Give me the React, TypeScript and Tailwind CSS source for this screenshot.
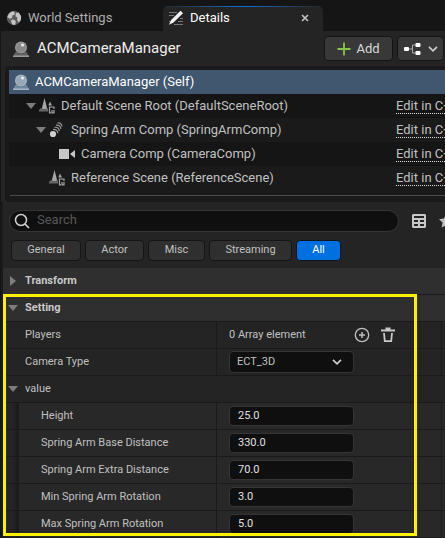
import type { ReactNode } from "react";

function Globe() {
  return (
    <svg viewBox="0 0 16 16" className="size-4 shrink-0">
      <circle cx="8" cy="8" r="7.2" fill="#5c5c5c" />
      <path d="M7 1.2 3.4 3 1.2 7l2.6 1.8L6 8l.4-2.6L9 4.2 8.4 2zM10 3l-.6 3.2 2 1.4L11 10l2 2.4 2-3V6l-2.4-3.4zM6 9.4 5 11l1.2 3.6 3 .4.6-3.4L8.6 10z" fill="#c4c4c4" />
    </svg>
  );
}

function DetailsIcon() {
  return (
    <svg viewBox="0 0 16 16" className="size-4 shrink-0">
      <path d="M1 2.500h8M1 5.500h5M12 8.500h3M1 11.500h2M10 11.500h5M6 14.500h9" stroke="#777" strokeWidth="1" />
      <path d="M12.500.800 15 3.300 5.500 12.500 1 14.800l2.100-4.900z" fill="#f2f2f2" />
    </svg>
  );
}

function ActorIcon({ light, dark }: { light: string; dark: string }) {
  return (
    <svg viewBox="0 0 16 16" className="size-4 shrink-0">
      <path d="M2.500 11h2L6 12.500h4l1.500-1.500h2L16 15.500H0z" fill={dark} />
      <path d="M0 14.500h16V16H0z" fill={light} />
      <circle cx="8" cy="6.500" r="6" fill={light} />
      <circle cx="8" cy="6.500" r="4.800" fill={dark} opacity=".3" />
      <circle cx="9.500" cy="4" r="1.500" fill="#eee" />
    </svg>
  );
}

function SceneIcon() {
  return (
    <svg viewBox="0 0 16 16" className="size-4 shrink-0">
      <path d="M5.500 0 2.800 10.500q2.700 1.400 5.400 0zM11 3.500 9.300 7.500H13z" fill="#a6a6a6" />
      <path d="M0 13.500V12l2-2q3.500 2.500 7 0v3.500z" fill="#666" />
      <path d="M15 11V9h-4.500v5.800h1.500M13 12v2.800h2V12" fill="none" stroke="#a6a6a6" strokeWidth="1.200" />
    </svg>
  );
}

function SpringIcon() {
  return (
    <svg viewBox="0 0 16 16" className="size-4 shrink-0">
      <circle cx="4" cy="12" r="3.100" fill="#d0d0d0" />
      <path d="M4 7.500q4.500-.500 4.800 3.800M5.500 5.300q4.500-.500 4.800 3.800M7 3.100q4.500-.500 4.800 3.800M8.500 1q4.200-.500 4.500 3.500" fill="none" stroke="#999" strokeWidth="1.200" />
    </svg>
  );
}

function CameraIcon() {
  return (
    <svg viewBox="0 0 16 16" className="size-4 shrink-0">
      <path d="M0 3h10v10H0zM16 4v8l-5-4z" fill="#c8c8c8" />
    </svg>
  );
}

function Arrow({ closed = false }: { closed?: boolean }) {
  return (
    <svg viewBox="0 0 10 10" className="size-[10px] shrink-0">
      <path d={closed ? "M2 0v10l6-5z" : "M0 2h10L5 8z"} fill="#7d7d7d" />
    </svg>
  );
}

function Chevron() {
  return (
    <svg viewBox="0 0 10 6" className="h-[6px] w-[10px] shrink-0">
      <path d="m1 .800 4 4 4-4" fill="none" stroke="#ccc" strokeWidth="1.700" />
    </svg>
  );
}

const tree = [
  { name: "Default Scene Root (DefaultSceneRoot)", icon: <SceneIcon />, pad: "pl-[17px]", open: true, bg: "bg-[#151515]" },
  { name: "Spring Arm Comp (SpringArmComp)", icon: <SpringIcon />, pad: "pl-[27px]", open: true, bg: "bg-[#1a1a1a]" },
  { name: "Camera Comp (CameraComp)", icon: <CameraIcon />, pad: "pl-[50px]", open: false, bg: "bg-[#151515]" },
  { name: "Reference Scene (ReferenceScene)", icon: <SceneIcon />, pad: "pl-10", open: false, bg: "bg-[#1a1a1a]" },
];

const filters = [
  { name: "General", width: "w-[70px]" },
  { name: "Actor", width: "w-[59px]" },
  { name: "Misc", width: "w-[57px]" },
  { name: "Streaming", width: "w-[83px]" },
  { name: "All", width: "w-[45px]" },
];

const values = [
  { name: "Height", value: "25.0" },
  { name: "Spring Arm Base Distance", value: "330.0" },
  { name: "Spring Arm Extra Distance", value: "70.0" },
  { name: "Min Spring Arm Rotation", value: "3.0" },
  { name: "Max Spring Arm Rotation", value: "5.0" },
];

function Category({ name, closed }: { name: string; closed?: boolean }) {
  return (
    <button className="flex h-[27px] w-full items-center gap-[7px] border-b border-[#1a1a1a] bg-[#2f2f2f] pl-[5px] font-bold text-[#c8c8c8]">
      <Arrow closed={closed} />
      {name}
    </button>
  );
}

function Property({ label, id, nested, children }: { label: string; id?: string; nested?: boolean; children: ReactNode }) {
  return (
    <div className="flex h-[27px] border-b border-[#1a1a1a]">
      {nested && <div className="w-4 shrink-0 bg-linear-to-r from-[#242424] from-60% to-[#191919]" />}
      <label
        htmlFor={id}
        className={`flex shrink-0 items-center border-r border-[#1a1a1a] pl-[22px] ${nested ? "w-[198px] bg-[#282828]" : "w-[214px]"}`}
      >
        {label}
      </label>
      <div className={`flex min-w-0 grow items-center pl-3 ${nested ? "bg-[#282828]" : ""}`}>{children}</div>
      <div className={`w-1 shrink-0 border-l border-[#1a1a1a] ${nested ? "bg-[#282828]" : ""}`} />
    </div>
  );
}

export default function App() {
  return (
    <main className="overflow-hidden bg-[#151515] font-['Roboto',sans-serif] text-[13px] text-[#c0c0c0]">
      <nav className="flex h-[31px] items-end">
        <button className="flex h-[25px] w-[163px] items-center gap-[6px] pb-[2px] pl-[6px] text-[#adadad]">
          <Globe />
          World Settings
        </button>
        <div className="h-[25px] w-40 overflow-hidden rounded-t-[5px] bg-[#242424]">
          <div className="h-px bg-linear-to-r from-[#242424] via-[#0070e0] to-[#242424]" />
          <div className="flex h-6 items-center pb-[2px] pl-[5px] pr-[14px]">
            <DetailsIcon />
            <button className="ml-[6px] grow text-left text-white">Details</button>
            <button aria-label="Close Details">
              <svg viewBox="0 0 8 8" className="size-2">
                <path d="m1 1 6 6M7 1 1 7" stroke="#c0c0c0" strokeWidth="1.700" />
              </svg>
            </button>
          </div>
        </div>
      </nav>

      <div className="ml-px bg-[#242424]">
        <header className="flex h-[35px] items-center pl-3">
          <ActorIcon light="#9a9a9a" dark="#626262" />
          <h1 className="ml-2 grow text-[15px] text-[#eee]">ACMCameraManager</h1>
          <button className="flex h-[25px] w-[69px] items-center justify-center gap-[5px] rounded-[4px] border border-[#151515] bg-[#383838] text-[#d8d8d8]">
            <svg viewBox="0 0 14 14" className="size-[14px]">
              <path d="M7 .500v13M.500 7h13" stroke="#8bc34a" strokeWidth="1.800" />
            </svg>
            Add
          </button>
          <button aria-label="Blueprint options" className="ml-1 mr-px flex h-[25px] w-[47px] items-center justify-center gap-[7px] rounded-[4px] border border-[#151515] bg-[#383838]">
            <svg viewBox="0 0 17 12" className="h-3 w-[17px]">
              <path d="M4 6h4M12 2H8.500v8H12" fill="none" stroke="#aaa" />
              <rect y="4" width="5" height="4" rx="1" fill="#fff" />
              <rect x="11.500" width="5" height="4" rx="1" fill="#fff" />
              <rect x="11.500" y="8" width="5" height="4" rx="1" fill="#fff" />
            </svg>
            <Chevron />
          </button>
        </header>

        <section aria-label="Components" className="ml-1 h-[136px] rounded-l-[4px] bg-[#1a1a1a] pl-1 pt-1">
          <div className="flex h-6 items-center gap-[6px] bg-[#40576f] pl-1 text-white">
            <ActorIcon light="#a7b6c3" dark="#7389a0" />
            ACMCameraManager (Self)
          </div>
          {tree.map((item) => (
            <div key={item.name} className={`flex h-6 items-center ${item.pad} ${item.bg}`}>
              {item.open && (
                <button aria-label="Collapse" className="mr-[3px]">
                  <Arrow />
                </button>
              )}
              {item.icon}
              <span className="ml-[6px] grow whitespace-nowrap">{item.name}</span>
              <div className="w-[49px] shrink-0 overflow-hidden">
                <a href="#edit" className="block h-4 w-[65px] whitespace-nowrap border-b border-dotted border-[#e0e0e0] leading-[15px]">
                  Edit in C++
                </a>
              </div>
            </div>
          ))}
          <hr className="ml-px mt-[5px] border-[#4a4a4a]" />
        </section>

        <section aria-label="Properties" className="relative border-l-2 border-[#1a1a1a] pt-2 text-[11px]">
          <div className="flex h-[22px] items-center overflow-hidden pl-[6px]">
            <div className="flex h-[22px] min-w-0 grow items-center rounded-full border border-[#353535] bg-[#0f0f0f] pl-1">
              <svg viewBox="0 0 16 16" className="size-4 shrink-0">
                <circle cx="7" cy="7" r="5.500" fill="none" stroke="#d0d0d0" strokeWidth="1.500" />
                <path d="m11 11 4 4" stroke="#d0d0d0" strokeWidth="1.700" />
              </svg>
              <input aria-label="Search" placeholder="Search" className="ml-[7px] min-w-0 grow bg-transparent pb-[2px] text-[13px] outline-none placeholder:text-[#575757]" />
            </div>
            <button aria-label="Property matrix" className="ml-[13px] shrink-0">
              <svg viewBox="0 0 14 14" className="size-[14px]">
                <path fillRule="evenodd" d="M1 0h12l1 1v12l-1 1H1l-1-1V1zM2 2v2h10V2zM2 6v2h4V6zm6 0v2h4V6zM2 10v2h4v-2zm6 0v2h4v-2z" fill="#c8c8c8" />
              </svg>
            </button>
            <button aria-label="Favorites" className="ml-3 w-[7px] shrink-0 overflow-hidden">
              <svg viewBox="0 0 16 16" className="size-4 max-w-none">
                <path d="m8 1 2.100 4.600 4.900.600-3.600 3.400.900 4.900L8 12.100l-4.300 2.400.900-4.900L1 6.200l4.900-.600z" fill="#c0c0c0" />
              </svg>
            </button>
          </div>

          <div className="flex gap-1 pb-[7px] pl-2 pt-2">
            {filters.map((filter) => (
              <button
                key={filter.name}
                className={`h-[21px] rounded-[4px] border border-[#151515] ${filter.width} ${filter.name === "All" ? "bg-[#0070e0] text-white" : "bg-[#2f2f2f]"}`}
              >
                {filter.name}
              </button>
            ))}
          </div>

          <Category name="Transform" closed />
          <Category name="Setting" />
          <Property label="Players">
            <span className="w-[125px]">0 Array element</span>
            <button aria-label="Add element">
              <svg viewBox="0 0 16 16" className="size-4">
                <circle cx="8" cy="8" r="6.700" fill="none" stroke="#c0c0c0" strokeWidth="1.300" />
                <path d="M8 5v6M5 8h6" stroke="#c0c0c0" strokeWidth="1.500" />
              </svg>
            </button>
            <button aria-label="Delete elements" className="ml-[10px]">
              <svg viewBox="0 0 16 16" className="size-4">
                <path d="M1 3.500h14M5.500 1.500h5M4 6l.800 8.200h6.400L12 6" fill="none" stroke="#c8c8c8" strokeWidth="1.800" />
              </svg>
            </button>
          </Property>
          <Property label="Camera Type" id="camera-type">
            <div className="relative">
              <select id="camera-type" className="block h-[22px] w-[125px] appearance-none rounded-[4px] border border-[#353535] bg-[#0f0f0f] pl-[7px]">
                <option>ECT_3D</option>
              </select>
              <div className="pointer-events-none absolute inset-y-0 right-3 flex items-center">
                <Chevron />
              </div>
            </div>
          </Property>
          <button className="flex h-[27px] w-full items-center gap-[7px] border-b border-[#1a1a1a] pl-[5px]">
            <Arrow />
            value
          </button>
          {values.map((item) => (
            <Property key={item.name} label={item.name} id={item.name} nested>
              <input id={item.name} defaultValue={item.value} className="h-5 w-[125px] rounded-[4px] border border-[#353535] bg-[#0f0f0f] pb-[2px] pl-2 text-[#e0e0e0] outline-none" />
            </Property>
          ))}
          <div className="pointer-events-none absolute bottom-[2px] left-0 right-7 h-[242px] border-3 border-[#fff200]" />
        </section>
      </div>
    </main>
  );
}
